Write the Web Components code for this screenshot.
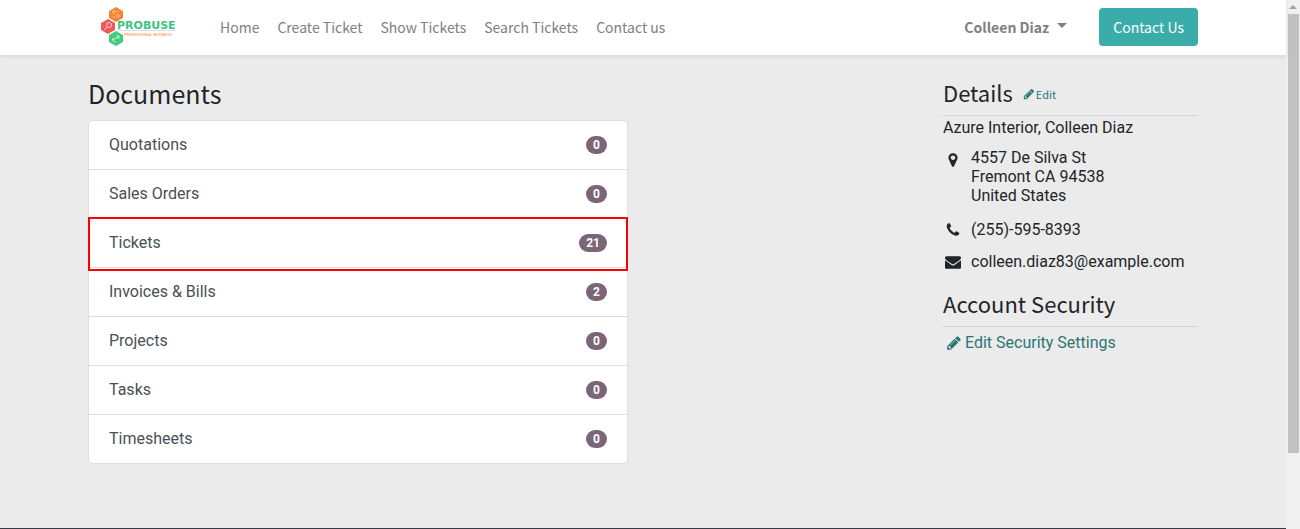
<!DOCTYPE html>
<html lang="en">
<head>
<meta charset="utf-8">
<title>My Portal</title>
<style>
  html, body { margin: 0; height: 100%; }
  body { font: 16px/24px Roboto, sans-serif; color: #212529; background: #ebebeb;
    --head: "Noto Sans CJK SC", "Noto Sans", sans-serif; --teal: #2b7674; }
</style>
</head>
<body>
<portal-page>
  <site-header slot="header">
    <nav-link>Home</nav-link>
    <nav-link>Create Ticket</nav-link>
    <nav-link>Show Tickets</nav-link>
    <nav-link>Search Tickets</nav-link>
    <nav-link>Contact us</nav-link>
    <user-menu slot="tools">Colleen Diaz</user-menu>
    <contact-button slot="tools">Contact Us</contact-button>
  </site-header>
  <doc-list slot="main" heading="Documents">
    <doc-item count="0">Quotations</doc-item>
    <doc-item count="0">Sales Orders</doc-item>
    <doc-item count="21" marked>Tickets</doc-item>
    <doc-item count="2">Invoices &amp; Bills</doc-item>
    <doc-item count="0">Projects</doc-item>
    <doc-item count="0">Tasks</doc-item>
    <doc-item count="0">Timesheets</doc-item>
  </doc-list>
  <account-details slot="side"></account-details>
</portal-page>

<script>
const define = (name, html, init) => {
  const tpl = document.createElement('template');
  tpl.innerHTML = html;
  customElements.define(name, class extends HTMLElement {
    constructor() {
      super();
      this.attachShadow({ mode: 'open' }).append(tpl.content.cloneNode(true));
    }
    connectedCallback() { if (init) init(this, this.shadowRoot); }
  });
};

const ICONS = {
  pencil: 'M491 1536l91-91-235-235-91 91v107h128v128h107zm523-928q0-22-22-22-10 0-17 7l-542 542q-7 7-7 17 0 22 22 22 10 0 17-7l542-542q7-7 7-17zm-54-192l416 416-832 832h-416v-416zm683 96q0 53-37 90l-166 166-416-416 166-165q36-38 90-38 53 0 91 38l235 234q37 39 37 91z',
  marker: 'M1152 640q0-106-75-181t-181-75-181 75-75 181 75 181 181 75 181-75 75-181zm256 0q0 109-33 179l-364 774q-16 33-47.500 52t-67.500 19-67.500-19-46.500-52l-365-774q-33-70-33-179 0-212 150-362t362-150 362 150 150 362z',
  phone: 'M1600 1240q0 27-10 70.500t-21 68.500q-21 50-122 106-94 51-186 51-27 0-53-3.500t-57.500-12.500-47-14.500-55.500-20.500-49-18q-98-35-175-83-127-79-264-216t-216-264q-48-77-83-175-3-9-18-49t-20.500-55.500-14.500-47-12.500-57.500-3.500-53q0-92 51-186 56-101 106-122 25-11 68.500-21t70.500-10q14 0 21 3 18 6 53 76 11 19 30 54t35 63.500 31 53.500q3 4 17.500 25t21.500 35.500 7 28.500q0 20-28.500 50t-62 55-62 53-28.500 46q0 9 5 22.500t8.500 20.500 14 24 11.500 19q76 137 174 235t235 174q2 1 19 11.500t24 14 20.500 8.500 22.500 5q18 0 46-28.500t53-62 55-62 50-28.500q14 0 28.500 7t35.500 21.500 25 17.500q25 15 53.500 31t63.500 35 54 30q70 35 76 53 3 7 3 21z',
  envelope: 'M1792 710v794q0 66-47 113t-113 47h-1472q-66 0-113-47t-47-113v-794q44 49 101 87 362 246 497 345 57 42 92.500 65.500t94.500 48 110 24.500h2q51 0 110-24.500t94.500-48 92.500-65.500q170-123 498-345 57-39 100-87zm0-294q0 79-49 151t-122 123q-376 261-468 325-10 7-42.500 31t-54 38.500-52 32.500-57.500 27-50 9h-2q-23 0-50-9t-57.500-27-52-32.500-54-38.500-42.500-31q-91-64-262-182.500t-205-142.500q-62-42-117-115.500t-55-136.500q0-78 41.500-130t118.500-52h1472q65 0 112.500 47t47.500 113z'
};

define('fa-icon', `
  <style>
    :host { display: inline-flex; justify-content: center; align-items: center; width: 20px; flex: none; }
    svg { width: 16px; height: 16px; fill: currentColor; }
    :host([small]) { width: 12px; }
    :host([small]) svg { width: 12px; height: 12px; }
  </style>
  <svg viewBox="0 0 1792 1792" aria-hidden="true"><path/></svg>`,
  (el, root) => root.querySelector('path').setAttribute('d', ICONS[el.getAttribute('name')]));

define('brand-logo', `
  <style>
    :host { display: block; flex: none; }
    a, svg { display: block; }
  </style>
  <a href="#" aria-label="Probuse">
  <svg width="108" height="40" viewBox="0 0 108 40">
    <path d="M28 0l7 4v7l-7 4-7-4v-7z" fill="#f58634"/>
    <g fill="none" stroke="#fbc193"><circle cx="26" cy="5" r="1.500"/><circle cx="30" cy="9" r="1.500"/><path d="M25 9l2 2M29 4l2 1"/></g>
    <path d="M20 12l7 4v7l-7 4-7-4v-7z" fill="#ee5a5c"/>
    <g fill="none" stroke="#fbd0d0"><circle cx="21" cy="18" r="2.500"/><path d="M19 20l-3 3"/></g>
    <path d="M28 24l7 4v7l-7 4-7-4v-7z" fill="#41cd7d"/>
    <path d="M24 33l8-4M25 31v3l3 1M29 28l2 4" fill="none" stroke="#c4f2d7"/>
    <path d="M29 23.500h58" stroke="#ddd"/>
    <text x="29" y="22" font-family="DejaVu Sans" font-weight="700" font-size="11" fill="#3fc380">PROBUSE</text>
    <text x="36" y="29" font-family="Roboto" font-size="4" fill="#f58634">PROFESSIONAL BUSINESS</text>
  </svg></a>`);

define('nav-link', `
  <style>
    :host { display: block; }
    a { color: #808080; text-decoration: none; }
  </style>
  <a href="#"><slot></slot></a>`);

define('user-menu', `
  <style>
    :host { display: block; }
    button { display: flex; align-items: center; gap: 8px; border: 0; padding: 0; background: none;
      font: inherit; font-weight: 700; color: #808080; }
    i { border: 5px solid transparent; border-top-color: #808080; border-bottom: 0; margin-bottom: 3px; }
  </style>
  <button type="button" aria-haspopup="true"><slot></slot><i></i></button>`);

define('contact-button', `
  <style>
    :host { display: block; }
    button { display: block; border: 0; border-radius: 4px; padding: 7px 14px; background: #3aadaa; color: #fff; font: inherit; }
  </style>
  <button type="button"><slot></slot></button>`);

define('site-header', `
  <style>
    :host { display: block; background: #fff; box-shadow: 0 2px 4px rgba(0,0,0,.08); position: relative;
      font-family: var(--head); font-size: 14px; }
    header { display: flex; align-items: center; max-width: 1110px; margin: 0 auto; padding: 7px 15px 8px; }
    nav { display: flex; gap: 18px; margin-left: 24px; }
    .tools { display: flex; align-items: center; gap: 32px; margin-left: auto; }
  </style>
  <header>
    <brand-logo></brand-logo>
    <nav><slot></slot></nav>
    <div class="tools"><slot name="tools"></slot></div>
  </header>`);

define('doc-item', `
  <style>
    :host { display: block; position: relative; border-bottom: 1px solid #dfdfdf; }
    :host(:last-of-type) { border-bottom: 0; }
    a { display: flex; align-items: center; justify-content: space-between; padding: 12px 20px;
      color: #495057; text-decoration: none; }
    b { font-size: 12px; line-height: 18px; padding: 0 7px; border-radius: 9px; background: #7c6576; color: #fff; }
    :host([marked])::after { content: ""; position: absolute; inset: -2px -1px -4px; border: 2px solid #f00;
      z-index: 1; pointer-events: none; }
  </style>
  <a href="#"><span><slot></slot></span><b></b></a>`,
  (el, root) => root.querySelector('b').textContent = el.getAttribute('count'));

define('doc-list', `
  <style>
    :host { display: block; }
    h3 { margin: 0 0 12px; font: 400 25px/29px var(--head); }
    div { background: #fff; border: 1px solid #dfdfdf; border-radius: 4px; }
  </style>
  <h3></h3><div><slot></slot></div>`,
  (el, root) => root.querySelector('h3').textContent = el.getAttribute('heading'));

define('contact-line', `
  <style>
    :host { display: flex; gap: 8px; margin-top: 8px; }
    fa-icon { height: 24px; }
  </style>
  <fa-icon></fa-icon><slot></slot>`,
  (el, root) => {
    const icon = document.createElement('fa-icon');
    icon.setAttribute('name', el.getAttribute('icon'));
    root.querySelector('fa-icon').replaceWith(icon);
  });

define('account-details', `
  <style>
    :host { display: block; }
    h4 { display: flex; align-items: center; gap: 10px; margin: 0; padding-bottom: 10px; border-bottom: 1px solid #d2d2d2;
      font: 400 22px/26px var(--head); }
    a { display: inline-flex; align-items: center; color: var(--teal); text-decoration: none; }
    h4 a { font-size: 11px; line-height: 20px; gap: 1px; margin-top: 4px; }
    address { font-style: normal; line-height: 19px; margin-bottom: 5px; }
    .security { margin-top: 16px; }
    .settings { gap: 1px; margin-top: 4px; margin-left: 1px; }
  </style>
  <h4>Details <a href="#"><fa-icon name="pencil" small></fa-icon>Edit</a></h4>
  <div>Azure Interior, Colleen Diaz</div>
  <contact-line icon="marker"><address>4557 De Silva St<br>Fremont CA 94538<br>United States</address></contact-line>
  <contact-line icon="phone"><span>(255)-595-8393</span></contact-line>
  <contact-line icon="envelope"><span>colleen.diaz83@example.com</span></contact-line>
  <h4 class="security">Account Security</h4>
  <a class="settings" href="#"><fa-icon name="pencil"></fa-icon>Edit Security Settings</a>`);

define('scroll-track', `
  <style>
    :host { display: flex; flex-direction: column; align-items: center; background: #f0f0f0; }
    i { border: 4px solid transparent; border-bottom-color: #a0a0a0; border-top: 0; margin: 5px 0; }
    div { width: 11px; height: 83%; background: #c1c1c1; }
  </style>
  <i></i><div></div>`);

define('portal-page', `
  <style>
    :host { display: grid; grid-template-columns: minmax(0, 1fr) 14px; min-height: 100vh; }
    .page { display: flex; flex-direction: column; }
    main { flex: 1; display: grid; grid-template-columns: 540fr 255fr; column-gap: 315px; align-content: start;
      width: 100%; max-width: 1140px; box-sizing: border-box; margin: 0 auto; padding: 24px 15px 64px; }
    footer { height: 1px; background: #353a45; }
  </style>
  <div class="page">
    <slot name="header"></slot>
    <main><slot name="main"></slot><slot name="side"></slot></main>
    <footer></footer>
  </div>
  <scroll-track aria-hidden="true"></scroll-track>`);
</script>
</body>
</html>
